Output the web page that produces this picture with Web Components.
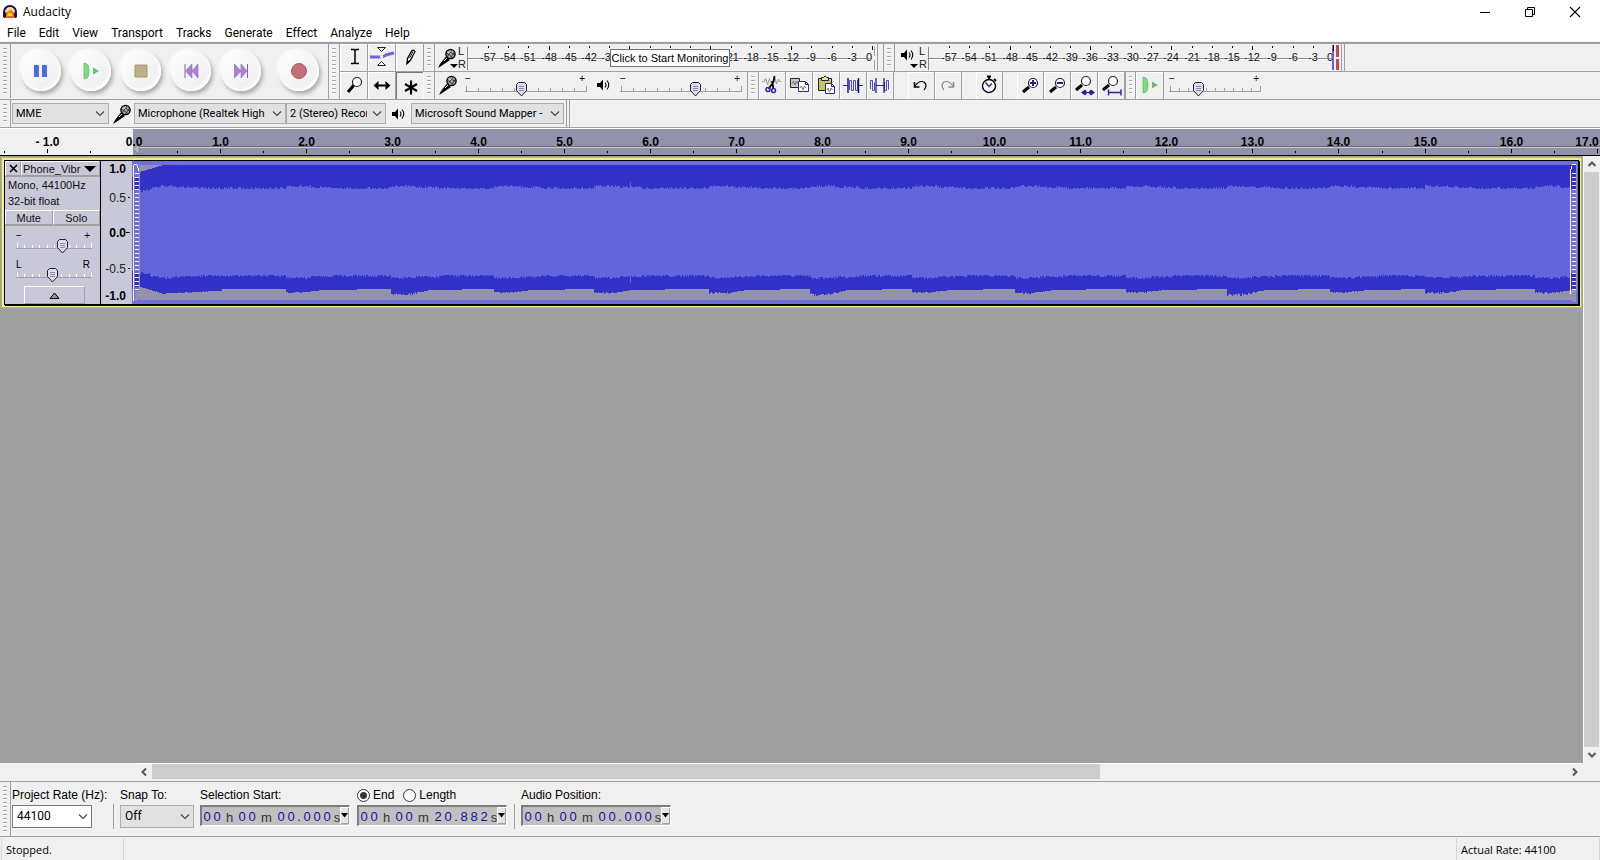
<!DOCTYPE html>
<html lang="en">
<head>
<meta charset="utf-8">
<title>Audacity</title>
<style>
html, body { margin: 0; height: 100%; }
body { font: 12px/16px "Liberation Sans", Arial, sans-serif; color: #000; background: #f0f0f0; }
</style>
</head>
<body>
<audacity-app></audacity-app>
<script>
const define = (name, template, setup) => {
  customElements.define(name, class extends HTMLElement {
    connectedCallback() {
      if (this.shadowRoot) return;
      const root = this.attachShadow({ mode: 'open' });
      root.innerHTML = typeof template === 'function' ? template(this) : template;
      if (setup) setup(root, this);
    }
  });
};
const svgUrl = s => `url("data:image/svg+xml,${encodeURIComponent(s)}")`;

/* ---------- icons ---------- */
const glass = '<path d="M13 13 L7 20" stroke="#000" stroke-width="3"/><circle cx="16" cy="10" r="4.5" fill="#fff" stroke="#222" stroke-width="1.2"/>';
const glassAt = inner => `<path d="M12 15 L6 20" stroke="#000" stroke-width="3"/><circle cx="16" cy="11" r="4.5" fill="#fff" stroke="#222" stroke-width="1.2"/>${inner}`;
const ICONS = {
  logo: [16, 16, '<path d="M2 11 V8 a6 6 0 0 1 12 0 v3" fill="#f7e9a0" stroke="#101060" stroke-width="2"/><path d="M4 14 V9 l1-2 1 2 1-4 1 3 1-4 1 4 1-1 1 2 v5z" fill="#f60"/><path d="M5 12 l2-4 1 2 1-2 2 4z" fill="#fd0"/><rect x="1" y="8" width="3" height="6" rx="1.4" fill="#14146e"/><rect x="12" y="8" width="3" height="6" rx="1.4" fill="#14146e"/>'],
  min: [12, 12, '<path d="M1 6.5 H11" stroke="#000"/>'],
  restore: [12, 12, '<path d="M1.5 3.5 h7 v7 h-7z M3.5 3.5 v-2 h7 v7 h-2" fill="none" stroke="#000"/>'],
  close: [12, 12, '<path d="M1 1 L11 11 M11 1 L1 11" stroke="#000" stroke-width="1.1"/>'],
  pause: [26, 26, '<path d="M6 7h5v12H6z M14 7h5v12h-5z" fill="#4a6ee0"/>'],
  play: [26, 26, '<path d="M6 5 l3 1 q2 1 2 7 t-2 7 l-3 1z" fill="#7edb7e" stroke="#68b868" stroke-width=".7"/><path d="M15 9.500 L21 13 L15 16.500z" fill="#68c070"/>'],
  stop: [26, 26, '<path d="M7 7h12v12H7z" fill="#bfae86" stroke="#a99a70"/>'],
  start: [26, 26, '<path d="M7 6v14" stroke="#8060a8"/><path d="M14 6v14L7.500 13z M20 6v14L14 13z" fill="#a884d0" stroke="#8a68b4" stroke-width=".6"/>'],
  end: [26, 26, '<path d="M19.500 6v14" stroke="#8060a8"/><path d="M6.500 6v14L13 13z M13 6v14L19 13z" fill="#a884d0" stroke="#8a68b4" stroke-width=".6"/>'],
  record: [26, 26, '<circle cx="13" cy="13" r="7.500" fill="#c47078" stroke="#a85860"/>'],
  ibeam: [26, 26, '<path d="M10 5.500h3l1 1 1-1h3 M14 6v13 M10 19.500h3l1-1 1 1h3" fill="none" stroke="#000" stroke-width="1.5"/>'],
  envelope: [26, 26, '<path d="M1 13 h8 q6 0 8-2 q3-1 8-2" fill="none" stroke="#6a6ad4" stroke-width="3"/><path d="M8.500 3.500h8l-4 4z M8.500 21.500h8l-4-4z" fill="#fff" stroke="#222"/><circle cx="12.500" cy="12.500" r="1.500" fill="#fff"/>'],
  pencil: [26, 26, '<path d="M10 19.500 l.5-5 4.500-8 q2-1 3 1 l-4.500 8.500z" fill="#fff" stroke="#000" stroke-width="1.300"/><path d="M12.500 14 l3.500-6.500" stroke="#222"/><path d="M9.500 20.500l1-4 3 1z"/>'],
  zoom: [26, 26, glass],
  shift: [26, 26, '<path d="M7 13.500h13" stroke="#000" stroke-width="2"/><path d="M4.500 13.500l5-4.500v9z M21.500 13.500l-5-4.500v9z"/>'],
  multi: [26, 26, '<path d="M14 8.500v14 M8 12l12 7 M20 12l-12 7" stroke="#000" stroke-width="2.200"/>'],
  mic: [20, 22, '<path d="M1 21 L3 17 L9 9.500 L13 13 L5 18.500z" fill="#000"/><path d="M7 14 l3-3" stroke="#eee"/><circle cx="13.500" cy="7" r="4.600" fill="#aaa" stroke="#000" stroke-width="1.400"/><path d="M9.500 6l7 5 M11.500 3.500l6 4.500 M10 10l5-7 M13.500 11l4-6" stroke="#222" stroke-width=".8"/><path d="M11.500 6 l2-2" stroke="#fff"/>'],
  speaker: [14, 14, '<path d="M0 5h3l3-3.500v11L3 9H0z"/><path d="M8 4.500 q2 2.500 0 5 M10 2.500 q3.500 4.500 0 9" fill="none" stroke="#000" stroke-width="1.100"/>'],
  cut: [26, 26, '<path d="M3 9.500h2l1.500-3 2 6 2-6 1 4 M15 9l1-3 1.500 6 2-5 1 2.500h2" fill="none" stroke="#999"/><path d="M15.500 4l-1 6-5 7 M13 9l1.500 8" fill="none" stroke="#000" stroke-width="1.800"/><circle cx="9" cy="17.500" r="2" fill="none" stroke="#2a2a9c" stroke-width="1.500"/><circle cx="14.500" cy="18.500" r="2" fill="none" stroke="#2a2a9c" stroke-width="1.500"/>'],
  copy: [26, 26, '<path d="M4.500 6.500h9v9h-9z" fill="#c8c8c8" stroke="#222"/><path d="M6 12l1.500-3 1.500 4 1.500-4 1.500 3" fill="none" stroke="#777"/><path d="M12.500 9.500h7l3 3v7h-10z" fill="#fff" stroke="#2a2a9c"/><path d="M19.500 9.500v3h3" fill="none" stroke="#2a2a9c"/><path d="M14 16l1.500-2 1.500 4 1.500-4 1.500 2" fill="none" stroke="#777"/>'],
  paste: [26, 26, '<path d="M5.500 6.500h13v12h-13z" fill="#c6c25c" stroke="#222"/><path d="M8.500 8.500v-3h2q1.500-3 3 0h2v3z" fill="#eee890" stroke="#222"/><path d="M12.500 11.500h6l3 3v7h-9z" fill="#fff" stroke="#2a2a9c"/><path d="M18.500 11.500v3h3" fill="none" stroke="#2a2a9c"/><path d="M14 18l1-2 1.500 4 1.500-4 1.500 2" fill="none" stroke="#777"/>'],
  trim: [26, 26, '<path d="M3 13.500h5 M18 13.500h5" stroke="#2a2ab4"/><path d="M9.500 18V8.500h2v10h2v-10h2v10h2V8" fill="none" stroke="#4a4ad0"/><path d="M8 6v15 M18.500 6v15" stroke="#101070" stroke-width="1.400"/>'],
  silence: [26, 26, '<path d="M9 13.500h8" stroke="#2a2ab4"/><path d="M3.500 17V8.500h2v10h2v-8 M17.500 10v8.500h2v-10h2v9" fill="none" stroke="#4a4ad0"/><path d="M9 6v15 M17 6v15" stroke="#101070" stroke-width="1.200"/>'],
  undo: [26, 26, '<path d="M6.500 10v5h5" fill="none" stroke="#000" stroke-width="1.600"/><path d="M7 14q4-6 9-4 4 3 0 8" fill="none" stroke="#000" stroke-width="1.200"/>'],
  redo: [26, 26, '<path d="M18.500 10v5h-5" fill="none" stroke="#888" stroke-width="1.600"/><path d="M18 14q-4-6-9-4-4 3 0 8" fill="none" stroke="#888" stroke-width="1.200"/>'],
  timer: [26, 26, '<circle cx="13" cy="14" r="6.500" fill="#fff" stroke="#000" stroke-width="1.400"/><path d="M11 4.500h4 M13 5v3 M18 7l2 2" stroke="#000" stroke-width="1.800"/><path d="M9.500 10.500l3.500 4 3-3" fill="none" stroke="#2a2a9c" stroke-width="1.500"/>'],
  zoomin: [26, 26, glassAt('<path d="M13 11h6 M16 8v6" stroke="#22229c" stroke-width="2"/>')],
  zoomout: [26, 26, glassAt('<path d="M13 11h6" stroke="#22229c" stroke-width="2"/>')],
  fitsel: [26, 26, '<path d="M11 13 L5 18" stroke="#000" stroke-width="3"/><circle cx="15" cy="9" r="4.500" fill="#fff" stroke="#222" stroke-width="1.200"/><path d="M11 20.500h12" stroke="#22229c"/><path d="M10 20.500l4-3v6z M16.500 20.500l-2.500-3v6z M17 20.500l3-3v6z M24 20.500l-4-3v6z" fill="#22229c"/>'],
  fitproj: [26, 26, '<path d="M11 13 L5 18" stroke="#000" stroke-width="3"/><circle cx="15" cy="9" r="4.500" fill="#fff" stroke="#222" stroke-width="1.200"/><path d="M10 20.500h13 M10.500 17.500v6 M23 17.500v6" stroke="#22229c" stroke-width="1.400"/>'],
};
define('au-icon', el => {
  const [w, h, body] = ICONS[el.getAttribute('name')];
  return `<style>:host{display:block;flex:none}svg{display:block}</style>
  <svg width="${w}" height="${h}" viewBox="0 0 ${w} ${h}" aria-hidden="true">${body}</svg>`;
});

/* ---------- title and menu ---------- */
define('title-bar', `<style>
  :host{display:flex;align-items:center;height:23px;background:#fff;padding-left:2px;font:12px/16px "Open Sans",sans-serif}
  au-icon{margin-right:5px}
  span{flex:1}
  button{width:45px;height:22px;border:0;padding:0;background:none;display:grid;place-items:center}
  </style><au-icon name="logo"></au-icon><span>Audacity</span>
  <button aria-label="Minimize"><au-icon name="min"></au-icon></button>
  <button aria-label="Restore"><au-icon name="restore"></au-icon></button>
  <button aria-label="Close"><au-icon name="close"></au-icon></button>`);
define('menu-bar', `<style>
  :host{display:block;background:#fff;height:18px}
  nav{display:flex;gap:13px;padding-left:7px}
  button{border:0;padding:0;background:none;font:12px/20px Roboto,sans-serif;color:#000}
  </style><nav>${['File','Edit','View','Transport','Tracks','Generate','Effect','Analyze','Help'].map(t => `<button>${t}</button>`).join('')}</nav>`);

/* ---------- toolbar parts ---------- */
define('tool-grip', `<style>
  :host{display:block;box-sizing:border-box;width:11px;flex:none;border-right:1px solid #a0a0a0;padding:4px 3px;align-self:stretch}
  div{height:100%;background:repeating-linear-gradient(#a8a8a8 0 1px,#fff 1px 2px,transparent 2px 4px)}
  </style><div></div>`);
define('tool-button', el => `<style>
  :host{display:block;flex:none;width:27px;height:27px}
  :host([wide]){width:28px}
  button{box-sizing:border-box;display:grid;place-items:start center;width:100%;height:100%;padding:0;background:#f0f0f0;border:0 solid #a0a0a0;border-right-width:1px;box-shadow:inset 1px 1px #fff;overflow:hidden}
  :host([pressed]) button{box-shadow:inset 1px 1px #777;border-color:#fff}
  </style><button aria-label="${el.getAttribute('label')}"><au-icon name="${el.getAttribute('icon')}"></au-icon></button>`);
define('round-button', el => `<style>
  :host{display:block;width:50px;flex:none}
  button{display:grid;place-items:center;width:40px;height:40px;margin:0 auto;padding:0;border:0;border-radius:50%;background:linear-gradient(135deg,#fff,#ececec);box-shadow:2px 3px 4px #a8a8a8,-2px -2px 3px #fff,inset -2px -2px 3px #fff}
  </style><button aria-label="${el.getAttribute('label')}"><au-icon name="${el.getAttribute('icon')}"></au-icon></button>`);

const THUMB = svgUrl('<svg xmlns="http://www.w3.org/2000/svg" width="11" height="15"><path d="M2.500.5h6l2 2v6l-5 5.500-5-5.500v-6z" fill="#dcdcf0" stroke="#222"/><path d="M3 4.500h5M3 6.500h5M3 8.500h5" stroke="#8888a8"/></svg>');
define('au-slider', el => {
  const w = +el.getAttribute('width'), light = el.hasAttribute('light');
  const step = Math.floor((w - 2) / 10 * 10) / 10;
  let ticks = '';
  for (let i = 0; i < 11; i++) ticks += `<path d="M${Math.round(1 + i * step) + .5} ${i % 10 ? 4 : 2}v${i % 10 ? 3 : 5}" stroke="${light ? '#fff' : '#a0a0a0'}"/>`;
  const [a, b] = (el.getAttribute('ends') || '−,+').split(',');
  return `<style>
  :host{display:block;flex:none;width:${w}px;font:10px/10px "Liberation Sans",sans-serif}
  .ends{display:flex;justify-content:space-between;padding:0 2px 0 0;height:8px;color:#000}
  .box{display:grid;height:15px}
  .box>*{grid-area:1/1}
  svg{display:block;margin-top:2px}
  input{appearance:none;background:none;margin:0 -5px;width:${w + 10}px;height:15px}
  input::-webkit-slider-thumb{appearance:none;width:11px;height:15px;background:${THUMB}}
  </style><div class="ends"><span>${a}</span><span>${b}</span></div>
  <div class="box"><svg width="${w}" height="9">${ticks}<path d="M0 7.500H${w}" stroke="#a0a0a0"/></svg>
  <input type="range" min="0" max="100" value="${el.getAttribute('value')}" aria-label="${el.getAttribute('label')}"></div>`;
});

define('level-meter', el => {
  const step = 384 / 19;
  const playing = el.hasAttribute('playback');
  let s = '<path d="M0.500 3v23 M0 14.500h405" stroke="#888"/><path d="M1 15.500h404" stroke="#fff"/>';
  for (let i = 0; i < 20; i++) {
    const x = Math.round(21 + i * step), db = i * 3 - 57;
    s += `<path d="M${x + .5} 2v${db % 12 ? 2 : 4}" stroke="#000"/>`;
    s += db ? `<text x="${x}" y="17">${db}</text>` : `<text x="402" y="17">0</text>`;
  }
  s += playing
    ? '<path d="M405 1v25" stroke="#6464e8" stroke-width="2"/><path d="M405.500 1v6" stroke="#000"/><path d="M409.500 1v12 M409.500 15v11" stroke="#c84848" stroke-width="3"/><path d="M413.500 0v27" stroke="#a0a0a0"/>'
    : '<path d="M407.500 3v9 M407.500 16v10 M410.500 0v27" stroke="#a0a0a0"/>';
  return `<style>
  :host{display:flex;flex:none;height:27px}
  .src{position:relative;width:${playing ? 33 : 32}px;flex:none;display:flex;align-items:center;font:11px/13px "Liberation Sans",sans-serif}
  .src au-icon{margin-left:${playing ? 6 : 2}px;margin-right:${playing ? 4 : 1}px;margin-bottom:${playing ? 5 : 0}px}
  .src span{width:9px;color:#222}
  .src i{position:absolute;left:15px;bottom:3px;border:4px solid transparent;border-top-color:#000;border-bottom:0}
  svg{display:block}
  text{font:11px "Liberation Sans",sans-serif;text-anchor:middle;fill:#111;stroke:#f0f0f0;stroke-width:1px;paint-order:stroke}
  </style><div class="src"><au-icon name="${playing ? 'speaker' : 'mic'}"></au-icon><span>L<br>R</span><i></i></div>
  <svg width="416" height="27">${s}</svg>`;
});

const CHEVRON = svgUrl('<svg xmlns="http://www.w3.org/2000/svg" width="10" height="6"><path d="M1 .5l4 4 4-4" fill="none" stroke="#444" stroke-width="1.100"/></svg>');
const SELECT_CSS = `select{appearance:none;box-sizing:border-box;margin:0;border:1px solid #adadad;border-radius:0;color:#000;background:#e1e1e1 ${CHEVRON} no-repeat right 3px center;overflow:hidden}`;
define('device-bar', `<style>${SELECT_CSS}
  :host{display:flex;align-items:center;height:27px}
  select{height:21px;padding:0 18px 0 3px;font:11px/19px Roboto,sans-serif;flex:none}
  .host{width:97px;margin:0 3px 0 1px}.in{width:152px;margin-left:2px}.ch{width:100px}.out{width:153px;margin-left:5px}
  .sp{margin-left:6px}
  .end{width:2px;margin-left:2px;align-self:stretch;border:solid #a0a0a0;border-width:0 1px}
  </style><tool-grip></tool-grip>
  <select class="host" aria-label="Audio host"><option>MME</option></select>
  <au-icon name="mic"></au-icon>
  <select class="in" aria-label="Recording device"><option>Microphone (Realtek High Definition Audio)</option></select>
  <select class="ch" aria-label="Recording channels"><option>2 (Stereo) Recording Channels</option></select>
  <au-icon class="sp" name="speaker"></au-icon>
  <select class="out" aria-label="Playback device"><option>Microsoft Sound Mapper - Output</option></select>
  <div class="end"></div>`);

define('tool-dock', `<style>
  :host{display:block;border-top:2px solid #a0a0a0;border-bottom:1px solid #fff;margin-top:1px}
  .upper{display:flex}
  .transport{display:flex;align-items:center;box-sizing:border-box;width:329px;height:55px;padding-bottom:1px;border-right:1px solid #a0a0a0;flex:none}
  .transport round-button:nth-of-type(1){margin-left:5px}
  .transport .rec{margin-left:8px}
  .under{border-bottom:1px solid #a0a0a0}
  .tools{display:grid;grid-template-columns:repeat(3,28px);grid-auto-rows:27px;row-gap:1px;flex:none;background:#a0a0a0}
  .right{flex:1;min-width:0}
  .row{display:flex;height:27px;border-bottom:1px solid #a0a0a0}
  .meter{position:relative;display:flex;box-sizing:border-box;border-right:1px solid #a0a0a0;width:449px;flex:none}
  .meter.play{width:450px}
  .tip{position:absolute;left:175px;top:5px;box-sizing:border-box;width:120px;height:18px;border:1px solid #767676;background:#fff;font:11px/16px "Liberation Sans",sans-serif;text-align:center;white-space:nowrap}
  .mixer{display:flex;box-sizing:border-box;width:313px;border-right:1px solid #a0a0a0;padding:0 0 1px 3px;flex:none;align-items:center}
  .mixer .a{margin-left:7px}.mixer .b{margin-left:9px}.mixer .s{margin-left:10px}
  .gap{width:14px;flex:none}
  .speed{margin:2px 0 0 5px}
  .line{border-left:1px solid #a0a0a0;box-sizing:border-box;width:11px}
  </style>
  <div class="upper">
    <div class="under"><div class="transport"><tool-grip></tool-grip>
      <round-button icon="pause" label="Pause"></round-button><round-button icon="play" label="Play"></round-button>
      <round-button icon="stop" label="Stop"></round-button><round-button icon="start" label="Skip to Start"></round-button>
      <round-button icon="end" label="Skip to End"></round-button><round-button class="rec" icon="record" label="Record"></round-button>
    </div></div>
    <tool-grip class="under"></tool-grip>
    <div class="tools under">
      <tool-button wide icon="ibeam" label="Selection Tool"></tool-button><tool-button wide icon="envelope" label="Envelope Tool"></tool-button><tool-button wide icon="pencil" label="Draw Tool"></tool-button>
      <tool-button wide icon="zoom" label="Zoom Tool"></tool-button><tool-button wide icon="shift" label="Time Shift Tool"></tool-button><tool-button wide pressed icon="multi" label="Multi-Tool"></tool-button>
    </div>
    <div class="right">
      <div class="row"><tool-grip></tool-grip>
        <div class="meter"><level-meter></level-meter><div class="tip" role="tooltip">Click to Start Monitoring</div></div>
        <tool-grip></tool-grip>
        <div class="meter play"><level-meter playback></level-meter></div>
      </div>
      <div class="row"><tool-grip></tool-grip>
        <div class="mixer"><au-icon name="mic"></au-icon><au-slider class="a" width="122" value="46" label="Recording Volume"></au-slider>
          <au-icon class="s" name="speaker"></au-icon><au-slider class="b" width="122" value="62" label="Playback Volume"></au-slider></div>
        <tool-grip></tool-grip>
        <tool-button icon="cut" label="Cut"></tool-button><tool-button icon="copy" label="Copy"></tool-button><tool-button icon="paste" label="Paste"></tool-button><tool-button icon="trim" label="Trim Audio"></tool-button><tool-button icon="silence" label="Silence Audio"></tool-button>
        <div class="gap"></div>
        <tool-button icon="undo" label="Undo"></tool-button><tool-button icon="redo" label="Redo"></tool-button>
        <div class="gap"></div>
        <tool-button icon="timer" label="Sync-Lock Tracks"></tool-button>
        <div class="gap"></div>
        <tool-button icon="zoomin" label="Zoom In"></tool-button><tool-button icon="zoomout" label="Zoom Out"></tool-button><tool-button icon="fitsel" label="Fit Selection"></tool-button><tool-button icon="fitproj" label="Fit Project"></tool-button>
        <tool-grip class="line"></tool-grip>
        <tool-button wide icon="play" label="Play-at-Speed"></tool-button>
        <au-slider class="speed" width="92" value="32" label="Playback Speed"></au-slider>
      </div>
    </div>
  </div>
  <device-bar class="under"></device-bar>`);

/* ---------- timeline ---------- */
define('time-ruler', `<style>
  :host{display:block;height:27px;box-sizing:border-box;border-bottom:1px solid #000;background:linear-gradient(90deg,#f0f0f0 133px,#9292aa 133px);overflow:hidden}
  svg{display:block;width:100%;height:26px}
  text{font:bold 12px "Liberation Sans",sans-serif;text-anchor:middle}
  </style><svg></svg>`, root => {
  const svg = root.querySelector('svg'), px = 86.07, zero = 133.5;
  const draw = () => {
    const width = svg.clientWidth;
    let s = `<path d="M139 17.500H${width}" stroke="#6c6c78"/><path d="M139 18.500H${width}" stroke="#c8c8d0"/><path d="M139 15v10l-6-5z" fill="#b8b8b8" stroke="#777" stroke-width=".6"/>`;
    for (let i = -3; zero + i / 2 * px < width; i++) {
      const t = i / 2, x = Math.round(zero + t * px) + .5;
      if (t === 0) { s += '<text x="134" y="17">0.0</text>'; continue; }
      s += `<path d="M${x} ${i % 2 ? 22 : 20}v${i % 2 ? 2 : 4}" stroke="#000"/>`;
      if (i % 2 === 0) s += `<text x="${Math.min(x, width - 13)}" y="17">${t < 0 ? '- ' : ''}${Math.abs(t).toFixed(1)}</text>`;
    }
    svg.innerHTML = s;
  };
  draw();
  addEventListener('resize', draw);
});

define('wave-view', `<style>
  :host{display:block;min-width:0;height:143px;background:#6e6edc}
  svg{display:block;width:100%;height:100%}
  </style><svg viewBox="0 0 1445 143" preserveAspectRatio="none" shape-rendering="crispEdges"></svg>`, root => {
  const start = 7, stop = 1438;
  /* each pulse: offset in the clip, depth of its lowest sample */
  const pulses = [[-60, 0], [18, 4], [154, 3], [259, 6], [362, 3], [462, 4], [577, 4], [678, 6], [779, 3], [882, 4], [993, 3], [1094, 6], [1197, 3], [1292, 4], [1402, 4]];
  let seed = 7;
  const rnd = () => (seed = (seed * 1103515245 + 12345) & 0x7fffffff) / 0x7fffffff;
  let dark = '', light = '';
  for (let x = start; x < stop; x++) {
    const p = pulses.filter(q => q[0] <= x).pop();
    const k = x - p[0], fall = k < 18 ? 1 : Math.max(0, 1 - (k - 18) / 20), bump = p[1] ? Math.max(0, Math.min(1, 1.3 - k / 45)) * 2 : 0;
    const attack = Math.max(0, 1 - (x - 7) / 24);
    const top = 4 + Math.round(attack * 7);
    let bottom = 129 + Math.round(p[1] * fall - rnd() * fall * p[1] * .5) - (k > 70 ? 1 : 0);
    if (x < 30) bottom = 126 + Math.round((x - 7) / 3.3 - rnd());
    if (x >= 30 && x < 90) bottom = 133 - Math.round((x - 30) / 20 + rnd() * .7);
    let lt = 28 - Math.round(bump) - Math.floor(rnd() * 2.4) + Math.round(attack * 3);
    let lb = 114 + Math.round(bump) + Math.floor(rnd() * 2.4) - Math.round(attack * 3);
    if (x === 498) { lt = 21; lb = 122; }
    dark += `M${x} ${top}h1V${bottom}h-1z`;
    light += `M${x} ${lt}h1V${lb}h-1z`;
  }
  let dash = '';
  for (let y = 12; y < 130; y += 4) dash += `M3 ${y}h4v1h-4z M1439 ${y}h4v1h-4z`;
  root.querySelector('svg').innerHTML = `<path d="M7 4H1443V139H7z" fill="#9292aa"/>
    <path d="${dark}" fill="#3232c8"/><path d="${light}" fill="#6464dc"/>
    <path d="M1438 29h6v83h-6z" fill="#6e6edc"/>
    <path d="M0 16h2v13h-2z M0 110h2v18h-2z M3 16h4v13h-4z M3 112h4v14h-4z M1438 4h6v25h-6z M1438 112h6v17h-6z" fill="#3232c8"/>
    <path d="M1443 4h1v127h-1z M7 5h1v130h-1z" fill="#9292aa"/>
    <path d="M1438 130h5v11h-3l-2-3z M3 130h4v7l-2 3h-2z" fill="#9292aa"/>
    <path d="${dash}M1 4h1v136h-1z M2 3h3v1h-3z M5 4h1v3h-1z M6 7h1v3h-1z M1437 8h1v125h-1z M1438 5h1v3h-1z M1439 3h4v1h-4z" fill="#fff"/>`;
});

define('track-panel', `<style>
  :host{display:block;width:95px;height:143px;background:#c8c8d8;border-right:1px solid #000;font:11px/16px "Liberation Sans",sans-serif;color:#111}
  button{box-sizing:border-box;border:1px solid #a0a0a0;border-top-color:#fff;border-left-color:#fff;background:#c8c8d8;padding:0;font:11px/12px "Liberation Sans",sans-serif;color:#111}
  .head{display:grid;grid-template-columns:16px 1fr;height:15px;border-bottom:1px solid #a0a0a0}
  .name{display:flex;align-items:center;justify-content:space-between;padding:0 3px 0 1px}
  .name i{border:6px solid transparent;border-top-color:#000;border-bottom:0}
  .x{display:grid;place-items:center}
  p{margin:0;padding:0 3px 1px}
  .pair{display:grid;grid-template-columns:1fr 1fr;height:15px;border-bottom:1px solid #a0a0a0}
  au-slider{margin:6px 0 0 11px}
  .pair+au-slider{margin-top:5px}
  .fold{display:grid;place-items:center;width:61px;height:18px;margin:3px 0 0 19px}
  svg{display:block}
  </style>
  <div class="head"><button class="x" aria-label="Close track"><svg width="9" height="9"><path d="M1 1l7 7M8 1l-7 7" stroke="#000" stroke-width="1.500"/></svg></button><button class="name">Phone_Vibr<i></i></button></div>
  <p>Mono, 44100Hz<br>32-bit float</p>
  <div class="pair"><button>Mute</button><button>Solo</button></div>
  <au-slider light width="76" value="61" label="Gain"></au-slider>
  <au-slider light width="76" value="48" ends="L,R" label="Pan"></au-slider>
  <button class="fold" aria-label="Collapse track"><svg width="11" height="7"><path d="M1 6.500h9L5.500 1z" fill="#9090a0" stroke="#000"/></svg></button>`);

define('audio-track', `<style>
  :host{display:grid;grid-template-columns:96px 31px minmax(0,1fr);margin:4px;border:1px solid #000;box-shadow:1px 1px #000,0 0 0 2px #f2f27a,0 0 0 3px #b4b47c;height:143px}
  .scale{display:block;background:#c8c8d8}
  text{font:12px "Liberation Sans",sans-serif;text-anchor:end;fill:#222}
  .b{font-weight:bold;fill:#000}
  </style><track-panel></track-panel>
  <svg class="scale" width="31" height="143"><text class="b" x="25" y="12">1.0</text><text x="25" y="41">0.5</text><text class="b" x="25" y="76">0.0</text><text x="25" y="112">-0.5</text><text class="b" x="25" y="139">-1.0</text>
  <path d="M27 36.500h2 M25 71.500h4 M27 107.500h2" stroke="#000"/></svg>
  <wave-view></wave-view>`);

const arrow = d => `<svg width="10" height="10"><path d="${d}" fill="none" stroke="#555" stroke-width="2"/></svg>`;
define('scroll-bar', el => {
  const v = el.hasAttribute('vertical');
  return `<style>
  :host{display:flex;flex-direction:${v ? 'column' : 'row'};background:#f0f0f0;box-sizing:border-box;${v ? 'width:17px;border-left:1px solid #fff' : 'height:17px;border-top:1px solid #fff'}}
  button{width:16px;height:16px;border:0;padding:0;background:none;display:grid;place-items:center;flex:none}
  .lane{flex:1;display:flex;flex-direction:${v ? 'column' : 'row'};min-width:0}
  .thumb{background:#cdcdcd;${v ? 'height:100%;margin-right:1px' : 'width:67%;margin-bottom:1px'}}
  svg{display:block}
  </style><button aria-label="${v ? 'Up' : 'Left'}">${arrow(v ? 'M1.500 7L5 3.500 8.500 7' : 'M7 1.500L3.500 5 7 8.500')}</button>
  <div class="lane"><div class="thumb"></div></div>
  <button aria-label="${v ? 'Down' : 'Right'}">${arrow(v ? 'M1.500 3L5 6.500 8.500 3' : 'M3 1.500L6.500 5 3 8.500')}</button>`;
});

/* ---------- selection bar and status ---------- */
define('time-field', el => {
  const kind = c => c === '.' ? 'dot' : /[hms]/.test(c) ? 'unit ' + c : 'num';
  const cells = [...el.getAttribute('value')].map(c => `<span class="${kind(c)}">${c}</span>`).join('');
  return `<style>
  :host{display:flex;box-sizing:border-box;height:21px;background:#c0c0c0;border:solid;border-width:2px 1px 1px 2px;border-color:#7c7c7c #fff #fff #7c7c7c;font:13px/19px "Liberation Sans",sans-serif;overflow:hidden}
  .digits{display:flex;flex:1;min-width:0}
  span{flex:none;text-align:center}
  .num{width:10px;color:#1c10a0}.dot{width:6px;color:#222}
  .unit{width:15px;color:#333;line-height:21px}
  .m{width:19px}.s{width:10px}
  button{width:9px;height:17px;box-sizing:border-box;border:0;background:#e4e4e4;padding:0;flex:none;display:grid;place-items:center;box-shadow:inset 1px 1px #fff,inset -1px -1px #a0a0a0}
  svg{display:block}
  </style><div class="digits">${cells}</div><button aria-label="Time format"><svg width="7" height="5"><path d="M0 0h7L3.500 4.500z"/></svg></button>`;
});
define('selection-bar', `<style>${SELECT_CSS}
  :host{display:flex;gap:6px;height:54px;border-top:1px solid #a0a0a0;border-bottom:1px solid #a0a0a0}
  tool-grip{margin-right:-5px}
  .group{flex:none}
  .cap{display:flex;align-items:center;height:18px;margin:4px 0 1px;white-space:nowrap}
  .w1{width:95px}.w2{width:74px}.w3{width:150px}
  select{height:23px;padding:0 20px 0 4px;font:12px/21px Roboto,sans-serif}
  #rate{width:80px;background-color:#fff;border-color:#7a7a7a}
  #snap{width:74px}
  .sep{width:1px;background:#a0a0a0;margin:22px 0 7px;flex:none}
  input{appearance:none;box-sizing:border-box;width:13px;height:13px;border:1px solid #333;border-radius:50%;background:#fff;margin:0 3px 0 0}
  input:checked{background:radial-gradient(#333 3px,#fff 4px)}
  label+input{margin-left:9px}
  time-field{width:150px}
  .mid{padding:0 1px}
  </style><tool-grip></tool-grip>
  <div class="group w1"><label class="cap" for="rate">Project Rate (Hz):</label><select id="rate"><option>44100</option></select></div>
  <div class="sep"></div>
  <div class="group w2"><label class="cap" for="snap">Snap To:</label><select id="snap"><option>Off</option></select></div>
  <div class="group w3"><div class="cap">Selection Start:</div><time-field value="00h00m00.000s"></time-field></div>
  <div class="group w3 mid"><div class="cap"><input type="radio" name="m" id="end" checked><label for="end">End</label><input type="radio" name="m" id="len"><label for="len">Length</label></div><time-field value="00h00m20.882s"></time-field></div>
  <div class="sep"></div>
  <div class="group w3"><div class="cap">Audio Position:</div><time-field value="00h00m00.000s"></time-field></div>`);
define('status-bar', `<style>
  :host{display:flex;height:22px;padding:1px 0 0 1px;font:11px/24px "Open Sans",sans-serif}
  div{box-sizing:border-box;padding-left:4px;border-left:1px solid #d7d7d7}
  .a{width:122px}.b{flex:1}.c{width:144px;border-right:1px solid #d7d7d7}
  </style><div class="a">Stopped.</div><div class="b"></div><div class="c">Actual Rate: 44100</div>`);

define('audacity-app', `<style>
  :host{display:flex;flex-direction:column;min-height:100vh}
  .main{flex:1;display:grid;grid-template-columns:minmax(0,1fr) 17px}
  .tracks{background:#a0a0a0}
  .foot{display:flex}
  .foot scroll-bar{flex:1;margin:0 17px 1px 136px}
  </style>
  <title-bar></title-bar><menu-bar></menu-bar><tool-dock></tool-dock><time-ruler></time-ruler>
  <div class="main"><div class="tracks"><audio-track></audio-track></div><scroll-bar vertical></scroll-bar></div>
  <div class="foot"><scroll-bar></scroll-bar></div>
  <selection-bar></selection-bar><status-bar></status-bar>`);
</script>
</body>
</html>
